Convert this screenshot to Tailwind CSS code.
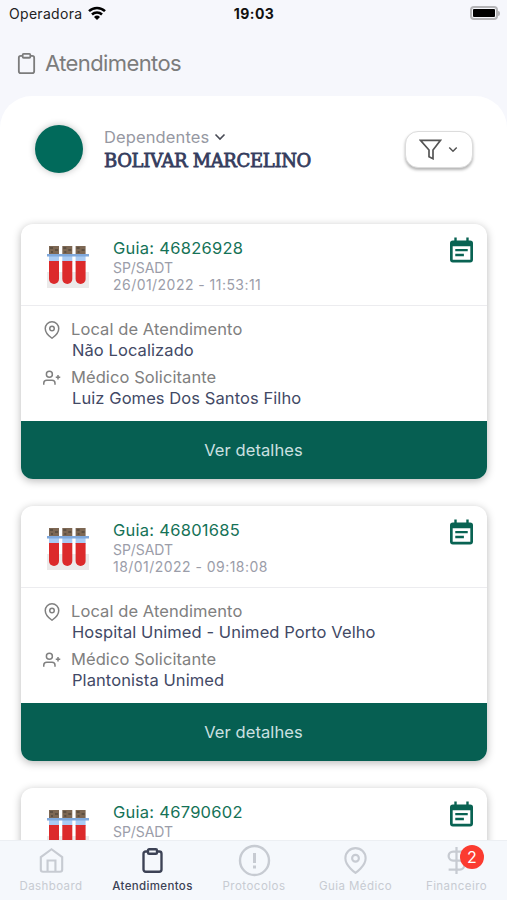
<!DOCTYPE html>
<html lang="pt-BR">
<head>
<meta charset="utf-8">
<meta name="viewport" content="width=device-width, initial-scale=1">
<title>Atendimentos</title>
<script src="https://cdn.jsdelivr.net/npm/@tailwindcss/browser@4"></script>
</head>
<body class="h-[900px] w-[507px] overflow-hidden bg-[#f6f7fc] font-['Inter','Liberation_Sans',sans-serif]">
<svg width="0" height="0" class="absolute">
  <defs>
    <symbol id="clipboard" viewBox="0 0 24 24"><path d="M16 4h2a2 2 0 0 1 2 2v14a2 2 0 0 1-2 2H6a2 2 0 0 1-2-2V6a2 2 0 0 1 2-2h2"/><rect x="8" y="2" width="8" height="4" rx="1"/></symbol>
    <symbol id="pin" viewBox="0 0 24 24"><path d="M21 10c0 7-9 13-9 13s-9-6-9-13a9 9 0 0 1 18 0z"/><circle cx="12" cy="10" r="3"/></symbol>
    <symbol id="user-plus" viewBox="0 0 24 24"><path d="M16 21v-2a4 4 0 0 0-4-4H5a4 4 0 0 0-4 4v2"/><circle cx="8.500" cy="7" r="4"/><path d="M20 8v6M23 11h-6"/></symbol>
    <symbol id="chevron" viewBox="0 0 12 8"><path d="M1.500 1.500 6 6l4.500-4.500"/></symbol>
    <symbol id="event" viewBox="0 0 24 26"><path fill-rule="evenodd" d="M4.500 0h2.500v3h10V0h2.500v3H21a3 3 0 0 1 3 3v17a3 3 0 0 1-3 3H3a3 3 0 0 1-3-3V6a3 3 0 0 1 3-3h1.500zM2.800 9v14.200h18.400V9zM5.500 12h13v2.400h-13zM5.500 17h9v2.400h-9z"/></symbol>
    <symbol id="tubes" viewBox="0 0 44 44">
      <path fill="#eceaea" d="M1 27h42v16H1z"/>
      <g id="tube"><path fill="#7d6753" d="M3 1h10v9H3z"/><path fill="#5e5042" d="M4 2h3v2H4zM9 4h3v2H9zM5 6h2v2H5z"/><path fill="#a9cbf3" d="M3 10h10v7H3z"/><path fill="#dc2a2b" d="M3 16h10v18a5 5 0 0 1-10 0z"/></g>
      <use href="#tube" x="13.300"/><use href="#tube" x="26.600"/>
      <path fill="#7fa8dc" d="M1 9h42v2.500H1z"/>
    </symbol>
  </defs>
</svg>
<div class="flex h-full flex-col">
  <header class="h-[96px] shrink-0">
    <div class="-mt-px grid h-7 grid-cols-3 items-center">
      <div class="flex items-center pl-[9px]">
        <span class="w-[74px] text-[14px] tracking-[0.3px] text-[#222]">Operadora</span>
        <svg class="ml-[5px] h-[14px] w-[18px]" viewBox="0 0 18 14" fill="none" stroke="#000" stroke-width="2.500"><path d="M1 5.200a11.500 11.500 0 0 1 16 0M4 8.500a7.200 7.200 0 0 1 10 0"/><path fill="#000" stroke="none" d="M9 14 6 10.900a4.300 4.300 0 0 1 6 0z"/></svg>
      </div>
      <div class="pl-px text-center text-[14px] font-bold tracking-[0.45px] text-[#111]">19:03</div>
      <div class="flex items-center justify-end pr-[7px]">
        <div class="h-[14px] w-[28px] rounded-[4px] border-2 border-[#b4b4b7] p-px"><div class="h-full rounded-[1px] bg-black"></div></div>
        <div class="h-[5px] w-[2px] rounded-r bg-[#b4b4b7]"></div>
      </div>
    </div>
    <div class="flex items-center pt-[21px] pl-[15px] text-[#7c7c7c]">
      <svg class="mr-[7px] size-[23px]" fill="none" stroke="currentColor" stroke-width="1.900"><use href="#clipboard"/></svg>
      <h1 class="text-[22px] leading-[30px] font-normal tracking-[-0.6px]">Atendimentos</h1>
    </div>
  </header>

  <main class="min-h-0 flex-1 overflow-hidden rounded-t-[32px] bg-white">
    <section class="flex h-[128px] pt-[29px] pr-[34px] pl-[35px]">
      <div class="mr-[20px] h-[50px] w-[49px] shrink-0"><div class="size-[48px] rounded-full bg-[#016a5b] shadow-[0_0_7px_rgba(0,0,0,0.25)]"></div></div>
      <div class="pt-px">
        <div class="flex h-[22px] items-center text-[16.500px] tracking-[0.12px] text-[#9698a2]">Dependentes<svg class="ml-[5px] h-[8px] w-[12px]" fill="none" stroke="#484b55" stroke-width="1.600"><use href="#chevron"/></svg></div>
        <div class="font-['DejaVu_Serif',serif] text-[18px] leading-[25px] tracking-[-0.35px] whitespace-nowrap text-[#353d5e] [-webkit-text-stroke:0.8px_#353d5e]">BOLIVAR MARCELINO</div>
      </div>
      <button class="mt-[6px] ml-auto flex h-[37px] w-[68px] items-center justify-center gap-[6px] rounded-[13px] border border-[#dcdcdc] bg-white pr-[2px] shadow-[0_2px_3px_rgba(0,0,0,0.3)]">
        <svg class="h-[21px] w-[23px]" viewBox="0 0 23 21" fill="none" stroke="#555" stroke-width="1.700"><path d="M1.500 1.300h20L14 11v8.700l-4-2V11z"/></svg>
        <svg class="h-[7px] w-[10px]" fill="none" stroke="#555" stroke-width="1.800"><use href="#chevron"/></svg>
      </button>
    </section>
    <section id="cards" class="flex flex-col gap-[27px] pr-[20px] pl-[21px]"></section>
  </main>

  <nav class="z-10 flex h-[60px] shrink-0 justify-between border-t border-[#eceff3] bg-[#f5f8fc] text-[11.500px] text-[#c7cbd2]">
    <div class="flex w-[102px] flex-col items-center pt-[6px]"><svg class="size-[27px]" viewBox="0 0 24 24" fill="none" stroke="currentColor" stroke-width="1.900"><path d="m2.500 9 9.500-7 9.500 7v11a2 2 0 0 1-2 2h-15a2 2 0 0 1-2-2zM8.500 22V12h7v10"/></svg><span class="mt-[4px] leading-[16px] tracking-[0.4px]">Dashboard</span></div>
    <div class="flex w-[101px] flex-col items-center pt-[6px] text-[#3c4255]"><svg class="size-[27px]" fill="none" stroke="currentColor" stroke-width="2.100"><use href="#clipboard"/></svg><span class="mt-[4px] leading-[16px] font-medium tracking-[0.35px]">Atendimentos</span></div>
    <div class="flex w-[102px] flex-col items-center pt-[3px]"><svg class="size-[33px]" viewBox="0 0 33 33" fill="none" stroke="currentColor" stroke-width="2.400"><circle cx="16.500" cy="16.500" r="14.500"/><path stroke-width="3" d="M16.500 9v10M16.500 21.500v3"/></svg><span class="mt-px leading-[16px] tracking-[0.5px]">Protocolos</span></div>
    <div class="flex w-[101px] flex-col items-center pt-[6px]"><svg class="size-[27px]" fill="none" stroke="currentColor" stroke-width="1.900"><use href="#pin"/></svg><span class="mt-[4px] leading-[16px] tracking-[0.45px]">Guia Médico</span></div>
    <div class="relative flex w-[101px] flex-col items-center pt-[6px]"><svg class="size-[27px]" viewBox="0 0 24 24" fill="none" stroke="currentColor" stroke-width="2"><path d="M12 0v24M18 4H9a4 4 0 0 0 0 8h6a4 4 0 0 1 0 8H5"/></svg><span class="mt-[4px] leading-[16px] tracking-[0.45px]">Financeiro</span>
      <span class="absolute top-[4px] left-[54px] flex size-[24px] items-center justify-center rounded-full bg-[#fb3b30] text-[16px] text-white">2</span></div>
  </nav>
</div>
<template id="card">
  <article class="h-[255px] shrink-0 overflow-hidden rounded-[12px] bg-white shadow-[0_2px_8px_rgba(0,0,0,0.28)]">
    <div class="flex h-[82px] border-b border-[#ececef] pt-[13px] pr-[14px] pl-[25px]">
      <svg class="mt-[8px] mr-[23px] size-[44px]"><use href="#tubes"/></svg>
      <div>
        <div data-field="guide" class="text-[16.500px] leading-[22px] tracking-[0.26px] text-[#157257]"></div>
        <div class="text-[14px] leading-[17px] tracking-[-0.05px] text-[#9b9da9]">SP/SADT</div>
        <div data-field="date" class="text-[14px] leading-[18px] tracking-[0.46px] text-[#9b9da9]"></div>
      </div>
      <svg class="ml-auto h-[26px] w-[23px] fill-[#096353]"><use href="#event"/></svg>
    </div>
    <div data-part="body" class="h-[115px] pt-[13px] pl-[22px] text-[16.500px] tracking-[0.08px]">
      <div class="flex h-[21px] items-center text-[#808080]"><svg class="mr-[10px] size-[18px]" fill="none" stroke="currentColor" stroke-width="2"><use href="#pin"/></svg><span>Local de Atendimento</span></div>
      <div data-field="place" class="h-[21px] pl-[29px] leading-[21px] whitespace-nowrap text-[#424965]"></div>
      <div class="mt-[6px] flex h-[21px] items-center text-[#808080]"><svg class="mr-[10px] size-[18px]" fill="none" stroke="currentColor" stroke-width="2"><use href="#user-plus"/></svg><span>Médico Solicitante</span></div>
      <div data-field="doctor" class="h-[21px] pl-[29px] leading-[21px] whitespace-nowrap text-[#424965]"></div>
    </div>
    <button data-part="action" class="h-[58px] w-full bg-[#065f52] pr-px text-[16.500px] tracking-[0.08px] text-[#cce0e1]">Ver detalhes</button>
  </article>
</template>
<script>
const visits = [
  {guide: 'Guia: 46826928', date: '26/01/2022 - 11:53:11', place: 'Não Localizado', doctor: 'Luiz Gomes Dos Santos Filho'},
  {guide: 'Guia: 46801685', date: '18/01/2022 - 09:18:08', place: 'Hospital Unimed - Unimed Porto Velho', doctor: 'Plantonista Unimed'},
  {guide: 'Guia: 46790602'}
];
const template = document.getElementById('card');
for (const visit of visits) {
  const card = template.content.cloneNode(true);
  for (const field of card.querySelectorAll('[data-field]')) field.textContent = visit[field.dataset.field] ?? '';
  if (!visit.place) card.querySelectorAll('[data-part]').forEach(part => part.remove());
  document.getElementById('cards').append(card);
}
</script>
</body>
</html>
